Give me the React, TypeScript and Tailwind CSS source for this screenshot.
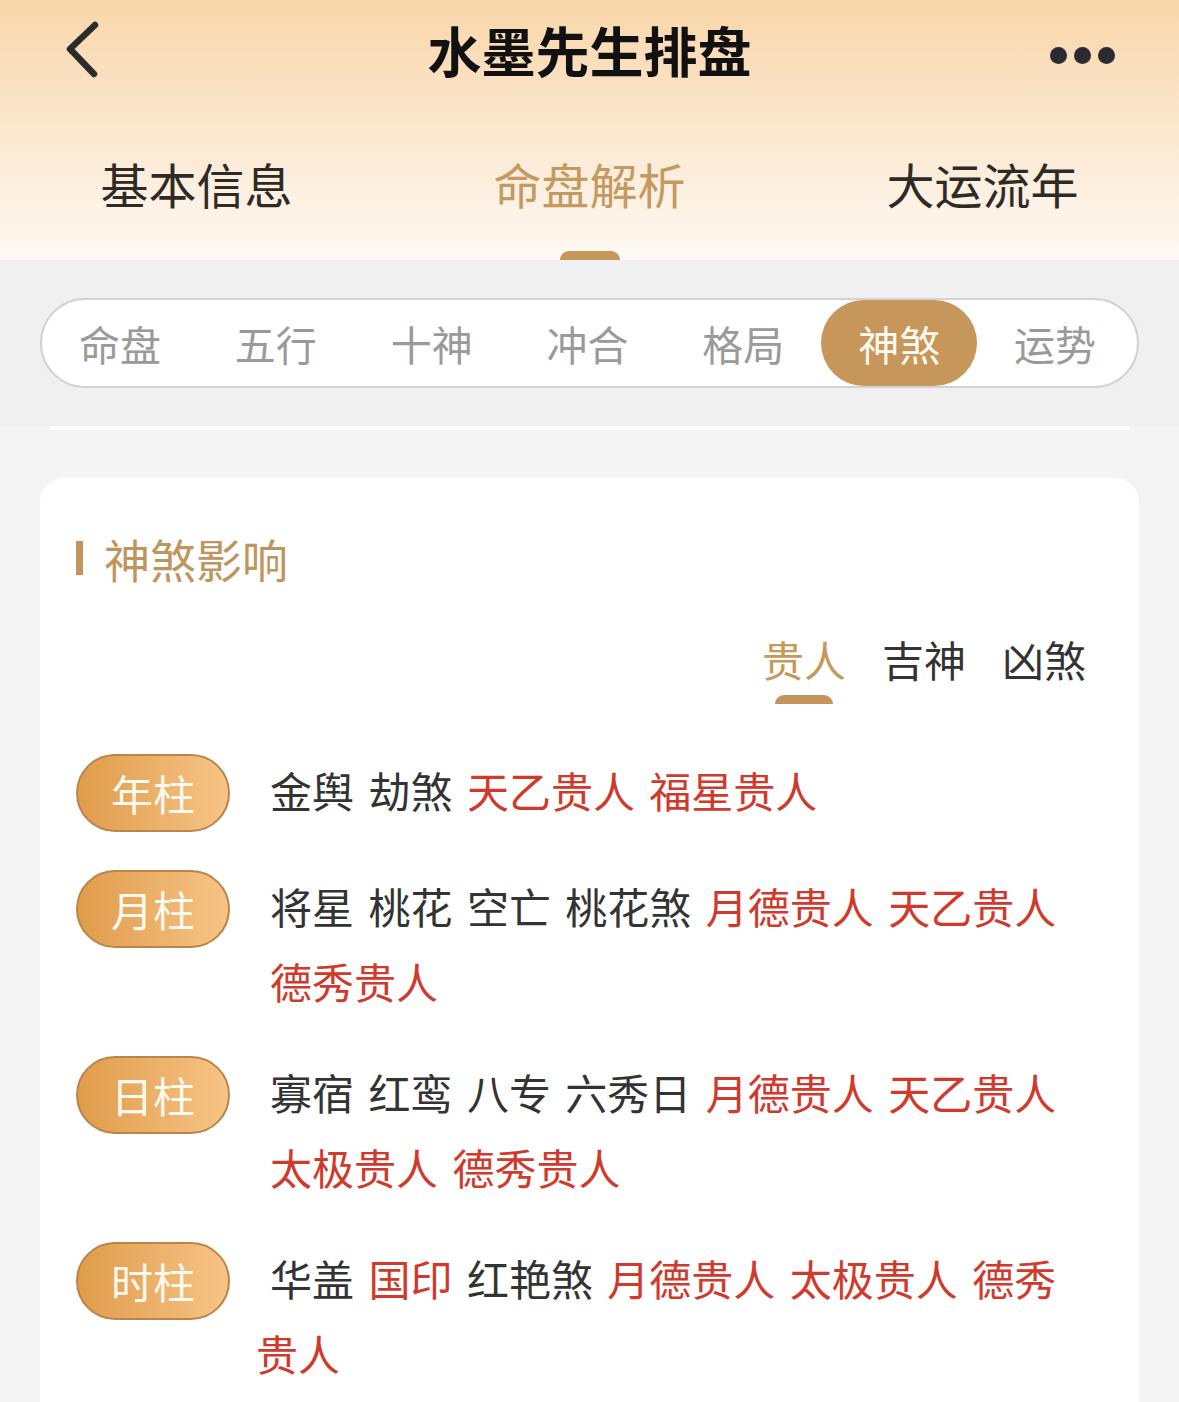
import React, { useState } from 'react';

type Item = { text: string; red?: boolean };

const FONT = '"Noto Sans CJK SC", "Noto Sans", sans-serif';

const pillars: { label: string; items: Item[]; indent?: boolean }[] = [
  {
    label: '年柱',
    items: [
      { text: '金舆' },
      { text: '劫煞' },
      { text: '天乙贵人', red: true },
      { text: '福星贵人', red: true },
    ],
  },
  {
    label: '月柱',
    items: [
      { text: '将星' },
      { text: '桃花' },
      { text: '空亡' },
      { text: '桃花煞' },
      { text: '月德贵人', red: true },
      { text: '天乙贵人', red: true },
      { text: '德秀贵人', red: true },
    ],
  },
  {
    label: '日柱',
    items: [
      { text: '寡宿' },
      { text: '红鸾' },
      { text: '八专' },
      { text: '六秀日' },
      { text: '月德贵人', red: true },
      { text: '天乙贵人', red: true },
      { text: '太极贵人', red: true },
      { text: '德秀贵人', red: true },
    ],
  },
  {
    label: '时柱',
    indent: true,
    items: [
      { text: '华盖' },
      { text: '国印', red: true },
      { text: '红艳煞' },
      { text: '月德贵人', red: true },
      { text: '太极贵人', red: true },
      { text: '德秀贵人', red: true },
    ],
  },
];

const mainTabs = ['基本信息', '命盘解析', '大运流年'];
const segTabs = ['命盘', '五行', '十神', '冲合', '格局', '神煞', '运势'];
const subTabs = ['贵人', '吉神', '凶煞'];

const App = () => {
  const [mainTab, setMainTab] = useState(1);
  const [segTab, setSegTab] = useState(5);
  const [subTab, setSubTab] = useState(0);

  return (
    <div className="min-h-[1402px] w-[1179px] bg-[#f4f4f4]" style={{ fontFamily: FONT }}>
      {/* header with gradient */}
      <div className="bg-gradient-to-b from-[#f9d6aa] via-[#fbe7cf] to-[#fefaf4]">
        <div className="relative flex h-[104px] items-center justify-center">
          <svg
            className="absolute left-[60px] top-[18px]"
            width="48"
            height="64"
            viewBox="0 0 48 64"
            fill="none"
          >
            <path
              d="M35 7 L10 31 L34 56"
              stroke="#2b2b2b"
              strokeWidth="6.5"
              strokeLinecap="round"
              strokeLinejoin="round"
            />
          </svg>
          <h1 className="-mt-[4px] text-[54px] font-bold leading-none text-[#111]">水墨先生排盘</h1>
          <div className="absolute right-[64px] top-[47px] flex gap-[7px]">
            <span className="h-[17px] w-[17px] rounded-full bg-[#2a2a30]" />
            <span className="h-[17px] w-[17px] rounded-full bg-[#2a2a30]" />
            <span className="h-[17px] w-[17px] rounded-full bg-[#2a2a30]" />
          </div>
        </div>
        <div className="flex h-[156px]">
          {mainTabs.map((t, i) => (
            <button
              key={t}
              onClick={() => setMainTab(i)}
              className="relative flex flex-1 justify-center pt-[55px]"
            >
              <span
                className={`text-[48px] leading-none ${
                  mainTab === i ? 'text-[#c39a62]' : 'text-[#2e2a26]'
                }`}
              >
                {t}
              </span>
              {mainTab === i && (
                <span className="absolute bottom-0 left-1/2 h-[9px] w-[60px] -translate-x-1/2 rounded-t-full bg-[#c6965a]" />
              )}
            </button>
          ))}
        </div>
      </div>

      {/* segmented control */}
      <div className="bg-[#f0f0f0] px-[40px] pt-[38px] pb-[38px]">
        <div className="flex h-[90px] rounded-full border-2 border-[#d2d2d2] bg-white pr-[4px]">
          {segTabs.map((t, i) => (
            <button
              key={t}
              onClick={() => setSegTab(i)}
              className={`flex flex-1 items-center justify-center rounded-full text-[41px] leading-none ${
                segTab === i ? 'bg-[#c6965a] text-[#fffaf0]' : 'text-[#9a9a9a]'
              }`}
            >
              {t}
            </button>
          ))}
        </div>
      </div>
      <div className="mx-[50px] h-[4px] bg-white/80" />

      {/* card */}
      <div className="px-[40px] pt-[48px]">
        <div className="rounded-t-[24px] bg-white pb-[40px] pl-[36px] pr-[53px] pt-[57px]">
          <div className="flex items-center">
            <span className="h-[34px] w-[7px] bg-[#c4955a]" />
            <h2 className="ml-[21px] text-[46px] leading-none text-[#bf955e]">神煞影响</h2>
          </div>

          <div className="mt-[57px] flex justify-end gap-[36px]">
            {subTabs.map((t, i) => (
              <button
                key={t}
                onClick={() => setSubTab(i)}
                className="relative flex h-[66px] items-start"
              >
                <span
                  className={`text-[42px] leading-none ${
                    subTab === i ? 'text-[#c49a5c]' : 'text-[#333]'
                  }`}
                >
                  {t}
                </span>
                {subTab === i && (
                  <span className="absolute bottom-0 left-1/2 h-[9px] w-[58px] -translate-x-1/2 rounded-t-full bg-[#c4955a]" />
                )}
              </button>
            ))}
          </div>

          <div className="mt-[48px] flex flex-col gap-[36px]">
            {pillars.map((p) => (
              <div key={p.label} className="flex items-start">
                <div className="mt-[2px] flex h-[78px] w-[154px] shrink-0 items-center justify-center rounded-full border-2 border-[#b98549] bg-gradient-to-r from-[#e09c4a] to-[#f7c486] text-[42px] leading-none text-[#fffaf0]">
                  {p.label}
                </div>
                <p
                  className={`text-[42px] leading-[75px] [word-spacing:5px] ${
                    p.indent ? 'ml-[26px] indent-[14px]' : 'ml-[40px]'
                  }`}
                >
                  {p.items.map((it, i) => (
                    <React.Fragment key={i}>
                      <span className={it.red ? 'text-[#cf3a2c]' : 'text-[#333]'}>{it.text}</span>
                      {i < p.items.length - 1 ? ' ' : ''}
                    </React.Fragment>
                  ))}
                </p>
              </div>
            ))}
          </div>
        </div>
      </div>
    </div>
  );
};

export default App;
